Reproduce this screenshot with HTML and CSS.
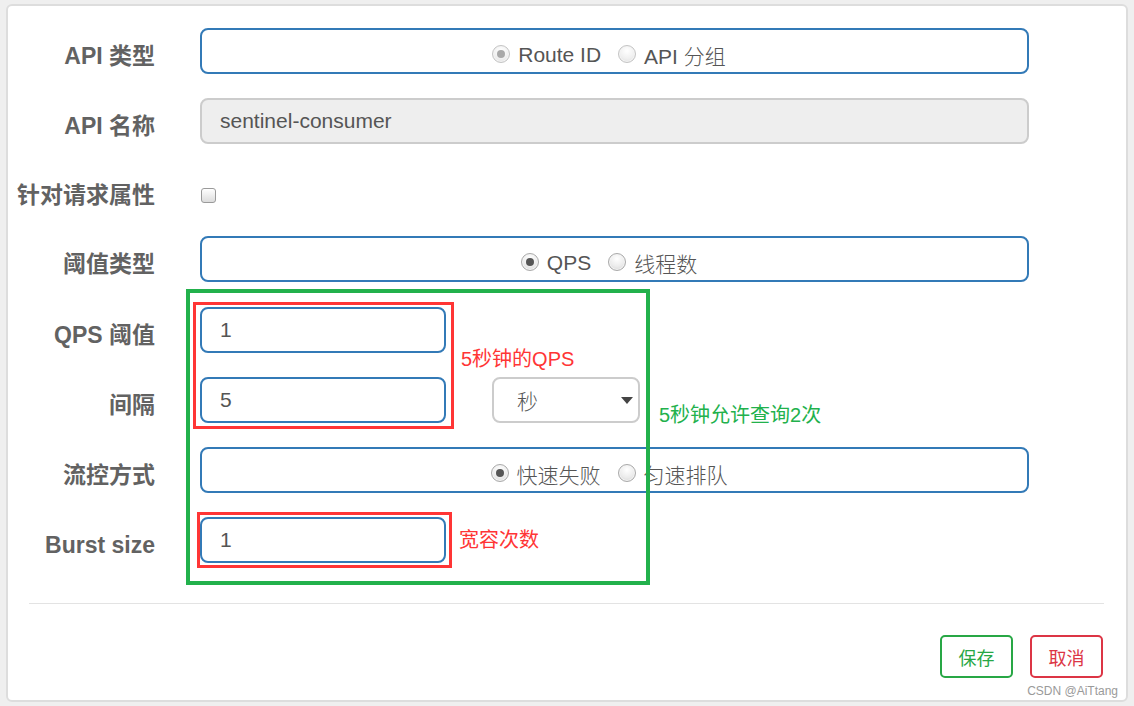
FILE: index.html
```html
<!DOCTYPE html>
<html lang="zh-CN">
<head>
<meta charset="utf-8">
<title>网关流控规则</title>
<link rel="stylesheet" href="styles.css">
</head>
<body>
<div class="panel">
  <div class="form">
    <div class="row">
      <div class="label">API 类型</div>
      <div class="box wide radios">
        <span class="radio"><span class="dot on dim"></span>Route ID</span>
        <span class="radio"><span class="dot dim"></span>API 分组</span>
      </div>
    </div>
    <div class="row">
      <div class="label">API 名称</div>
      <input class="input disabled" type="text" value="sentinel-consumer" readonly>
    </div>
    <div class="row row-check">
      <div class="label">针对请求属性</div>
      <span class="checkbox"></span>
    </div>
    <div class="row row-gap">
      <div class="label">阈值类型</div>
      <div class="box wide radios">
        <span class="radio"><span class="dot on"></span>QPS</span>
        <span class="radio"><span class="dot"></span>线程数</span>
      </div>
    </div>
    <div class="row">
      <div class="label">QPS 阈值</div>
      <input class="input" type="text" value="1">
    </div>
    <div class="row">
      <div class="label">间隔</div>
      <input class="input" type="text" value="5">
      <div class="select"><span>秒</span><svg width="12" height="7" viewBox="0 0 12 7"><polygon points="0,0 12,0 6,7" fill="#444"/></svg></div>
    </div>
    <div class="row">
      <div class="label">流控方式</div>
      <div class="box wide radios">
        <span class="radio"><span class="dot on"></span>快速失败</span>
        <span class="radio"><span class="dot"></span>匀速排队</span>
      </div>
    </div>
    <div class="row">
      <div class="label">Burst size</div>
      <input class="input" type="text" value="1">
    </div>

    <div class="mark mark-green"></div>
    <div class="mark mark-red1"></div>
    <div class="mark mark-red2"></div>
    <div class="note note-qps">5秒钟的QPS</div>
    <div class="note note-interval">5秒钟允许查询2次</div>
    <div class="note note-burst">宽容次数</div>
  </div>
  <div class="footer">
    <button class="btn btn-save">保存</button>
    <button class="btn btn-cancel">取消</button>
  </div>
  <div class="watermark">CSDN @AiTtang</div>
</div>
</body>
</html>
```

FILE: styles.css
```css
body {
  margin: 0;
  background: #efefef;
  font-family: "Liberation Sans", "Noto Sans CJK SC", sans-serif;
}

.panel {
  position: relative;
  box-sizing: border-box;
  margin: 4px 0 0 6px;
  width: 1122px;
  height: 698px;
  background: #fff;
  border: 2px solid #dddddd;
  border-radius: 6px;
}

.form {
  position: relative;
  padding: 22px 0 16px;
}

.row {
  display: flex;
  align-items: center;
  height: 46px;
  margin-bottom: 24px;
}

.row-gap {
  margin-bottom: 25px;
}

.row-check {
  box-sizing: border-box;
  height: 44px;
  padding-top: 10px;
}

.label {
  width: 147px;
  margin-right: 45px;
  text-align: right;
  white-space: nowrap;
  font-weight: bold;
  font-size: 23px;
  line-height: 30px;
  color: #626262;
  padding-top: 9px;
}

.row-check .label {
  padding-top: 0;
}

.box {
  box-sizing: border-box;
  height: 46px;
  border: 2px solid #337ab7;
  border-radius: 8px;
  background: #fff;
}

.wide {
  width: 829px;
}

.radios {
  display: flex;
  justify-content: center;
  align-items: center;
  gap: 17px;
  padding: 8px 11px 0 0;
  font-size: 21px;
  font-weight: 300;
  color: #555;
}

.radio {
  display: flex;
  align-items: center;
  gap: 8px;
  white-space: nowrap;
}

.dot {
  flex: none;
  position: relative;
  box-sizing: border-box;
  width: 18px;
  height: 18px;
  margin-top: -3px;
  border-radius: 50%;
  border: 1px solid #a9a9a9;
  background: radial-gradient(circle at 50% 30%, #ffffff 0%, #ececec 55%, #d0d0d0 100%);
  box-shadow: inset 0 0 0 1px #f4f4f4;
}

.dot.dim {
  border-color: #c4c4c4;
  background: radial-gradient(circle at 50% 30%, #ffffff 0%, #f0f0f0 55%, #dadada 100%);
}

.dot.on::after {
  content: "";
  position: absolute;
  inset: 4px;
  border-radius: 50%;
  background: #555;
}

.dot.on.dim::after {
  background: #a8a8a8;
}

.input {
  box-sizing: border-box;
  width: 246px;
  height: 46px;
  margin: 0;
  border: 2px solid #337ab7;
  border-radius: 8px;
  padding: 0 18px;
  font: 21px "Liberation Sans", "Noto Sans CJK SC", sans-serif;
  color: #555;
  background: #fff;
  outline: none;
}

.input.disabled {
  width: 829px;
  background: #eeeeee;
  border-color: #cccccc;
}

.checkbox {
  box-sizing: border-box;
  width: 15px;
  height: 15px;
  margin-left: 1px;
  border: 1px solid #9a9a9a;
  border-radius: 3px;
  background: linear-gradient(#ffffff, #dcdcdc);
}

.select {
  box-sizing: border-box;
  width: 148px;
  height: 46px;
  margin-left: 46px;
  border: 2px solid #cccccc;
  border-radius: 8px;
  display: flex;
  align-items: center;
  justify-content: space-between;
  padding: 0 5px 0 23px;
  font-size: 21px;
  font-weight: 300;
  color: #555;
  background: #fff;
}

.select svg {
  display: block;
}

.mark {
  position: absolute;
  box-sizing: border-box;
  pointer-events: none;
}

.mark-green {
  left: 178px;
  top: 283px;
  width: 464px;
  height: 296px;
  border: 4px solid #22b14c;
}

.mark-red1 {
  left: 185px;
  top: 296px;
  width: 261px;
  height: 127px;
  border: 3px solid #ff3535;
}

.mark-red2 {
  left: 189px;
  top: 506px;
  width: 255px;
  height: 56px;
  border: 3px solid #ff3535;
}

.note {
  position: absolute;
  font-size: 20px;
  line-height: 24px;
  white-space: nowrap;
}

.note-qps {
  left: 453px;
  top: 341px;
  color: #ff3535;
}

.note-interval {
  left: 651px;
  top: 397px;
  color: #22b14c;
}

.note-burst {
  left: 451px;
  top: 522px;
  color: #ff3535;
}

.footer {
  display: flex;
  justify-content: flex-end;
  gap: 17px;
  margin: 0 22px 0 21px;
  padding: 31px 1px 0 0;
  border-top: 1px solid #e3e3e3;
}

.btn {
  box-sizing: border-box;
  width: 73px;
  height: 43px;
  padding: 0;
  border: 2px solid;
  border-radius: 5px;
  background: #fff;
  font: 18px "Noto Sans CJK SC", sans-serif;
}

.btn-save {
  border-color: #28a745;
  color: #28a745;
}

.btn-cancel {
  border-color: #dc3545;
  color: #dc3545;
}

.watermark {
  position: absolute;
  right: 8px;
  bottom: 2px;
  font-size: 12px;
  line-height: 14px;
  color: #9a9a9a;
}
```
